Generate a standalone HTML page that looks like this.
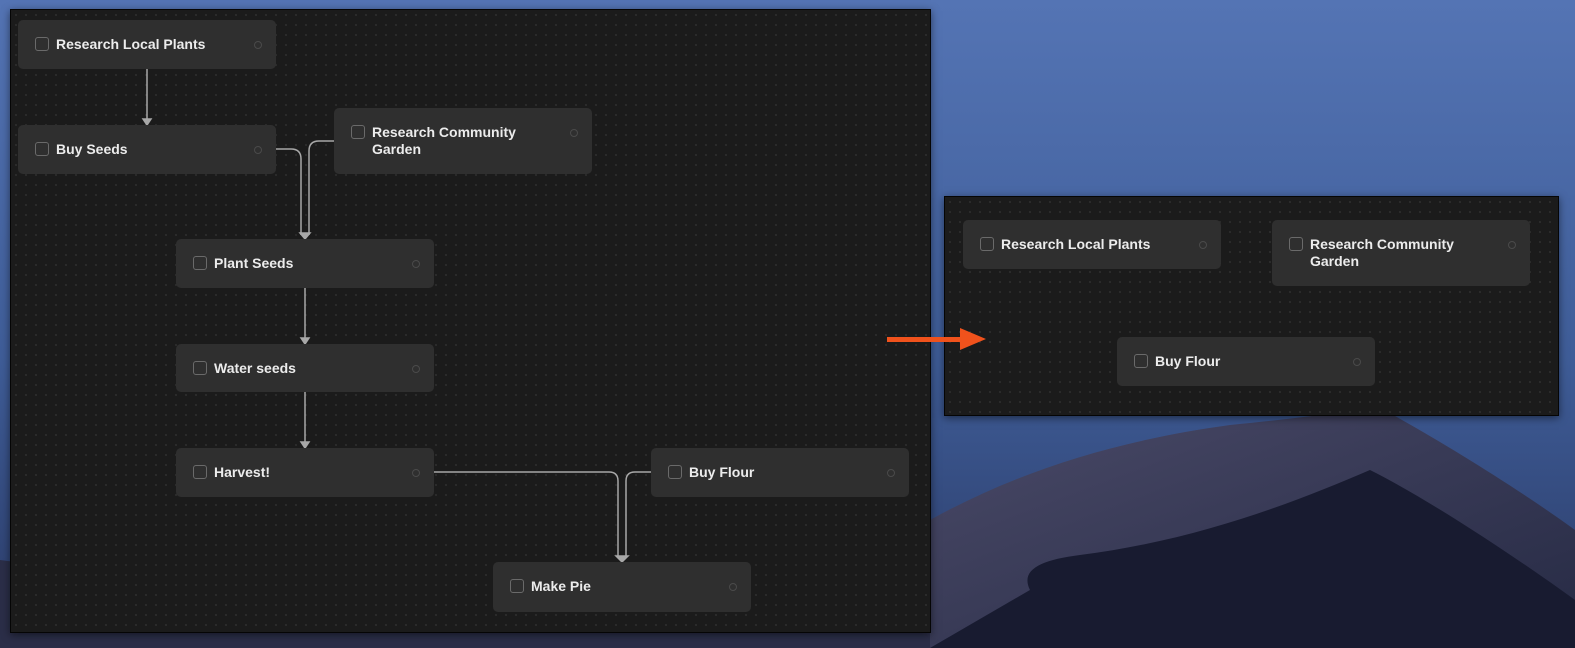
<!DOCTYPE html>
<html><head><style>
body{margin:0;width:1575px;height:648px;overflow:hidden;position:relative;font-family:"Liberation Sans",sans-serif;}
.bg{position:absolute;inset:0}
.panel{position:absolute;background-color:#1b1b1b;background-image:radial-gradient(circle,#333 0.7px,transparent 1.1px);background-size:10px 10px;border:1px solid #050505;box-shadow:0 2px 8px rgba(0,0,0,.5)}
.node{position:absolute;width:258px;background:#2f2f2f;border-radius:5px;color:#ececec;font-weight:bold;font-size:14px;line-height:17px;box-sizing:border-box;padding:16px 40px 16px 38px}
.node:before{content:"";position:absolute;left:17px;top:17px;width:12px;height:12px;border:1.5px solid #6a6a6a;border-radius:3px}
.node:after{content:"";position:absolute;right:14px;top:21px;width:6px;height:6px;border:1.5px solid #4a4a4a;border-radius:50%}
svg.e{position:absolute;left:0;top:0}
</style></head><body>
<svg class="bg" width="1575" height="648">
<defs><linearGradient id="sky" x1="0" y1="0" x2="0" y2="1"><stop offset="0" stop-color="#5474b4"/><stop offset=".55" stop-color="#3f5d98"/><stop offset="1" stop-color="#2a3a66"/></linearGradient>
<linearGradient id="d1" x1="0" y1="0" x2="1" y2="1"><stop offset="0" stop-color="#4a4a68"/><stop offset="1" stop-color="#262a44"/></linearGradient></defs>
<rect width="1575" height="648" fill="url(#sky)"/>
<path d="M930 520 C1020 470 1120 440 1230 425 C1300 418 1350 412 1375 405 C1440 440 1520 490 1575 530 L1575 648 L930 648 Z" fill="url(#d1)"/>
<path d="M1030 590 C1020 570 1040 560 1080 555 C1200 540 1300 500 1370 470 C1430 500 1520 560 1575 600 L1575 648 L930 648 Z" fill="#181b30"/>
<path d="M0 560 L0 648 L930 648 L930 600 C600 620 300 600 0 560Z" fill="#2b2e48"/>
</svg>
<div class="panel" style="left:10px;top:9px;width:919px;height:622px"></div>
<div class="panel" style="left:944px;top:196px;width:613px;height:218px"></div>
<svg class="e" width="1575" height="648" fill="none" stroke="#a8a8a8" stroke-width="1.5">
<path d="M147 69 V121"/><path d="M143 119 L147 125 L151 119Z" fill="#a8a8a8"/>
<path d="M276 149 H291 Q301 149 301 159 V235"/>
<path d="M334 141 H319 Q309 141 309 151 V235"/>
<path d="M300 233 L305 239 L310 233Z" fill="#a8a8a8"/>
<path d="M305 288 V340"/><path d="M301 338 L305 344 L309 338Z" fill="#a8a8a8"/>
<path d="M305 392 V444"/><path d="M301 442 L305 448 L309 442Z" fill="#a8a8a8"/>
<path d="M434 472 H609 Q618 472 618 481 V558"/>
<path d="M651 472 H635 Q626 472 626 481 V558"/>
<path d="M616 556 L622 562 L628 556Z" fill="#a8a8a8"/>
</svg>
<div class="node" style="left:18px;top:20px;height:49px">Research Local Plants</div>
<div class="node" style="left:18px;top:125px;height:49px">Buy Seeds</div>
<div class="node" style="left:334px;top:108px;height:66px">Research Community Garden</div>
<div class="node" style="left:176px;top:239px;height:49px">Plant Seeds</div>
<div class="node" style="left:176px;top:344px;height:48px">Water seeds</div>
<div class="node" style="left:176px;top:448px;height:49px">Harvest!</div>
<div class="node" style="left:651px;top:448px;height:49px">Buy Flour</div>
<div class="node" style="left:493px;top:562px;height:50px">Make Pie</div>
<div class="node" style="left:963px;top:220px;height:49px">Research Local Plants</div>
<div class="node" style="left:1272px;top:220px;height:66px">Research Community Garden</div>
<div class="node" style="left:1117px;top:337px;height:49px">Buy Flour</div>
<svg class="e" width="1575" height="648"><path d="M887 337 H960 V328 L986 339 L960 350 V342 H887Z" fill="#f0521c"/></svg>
</body></html>
